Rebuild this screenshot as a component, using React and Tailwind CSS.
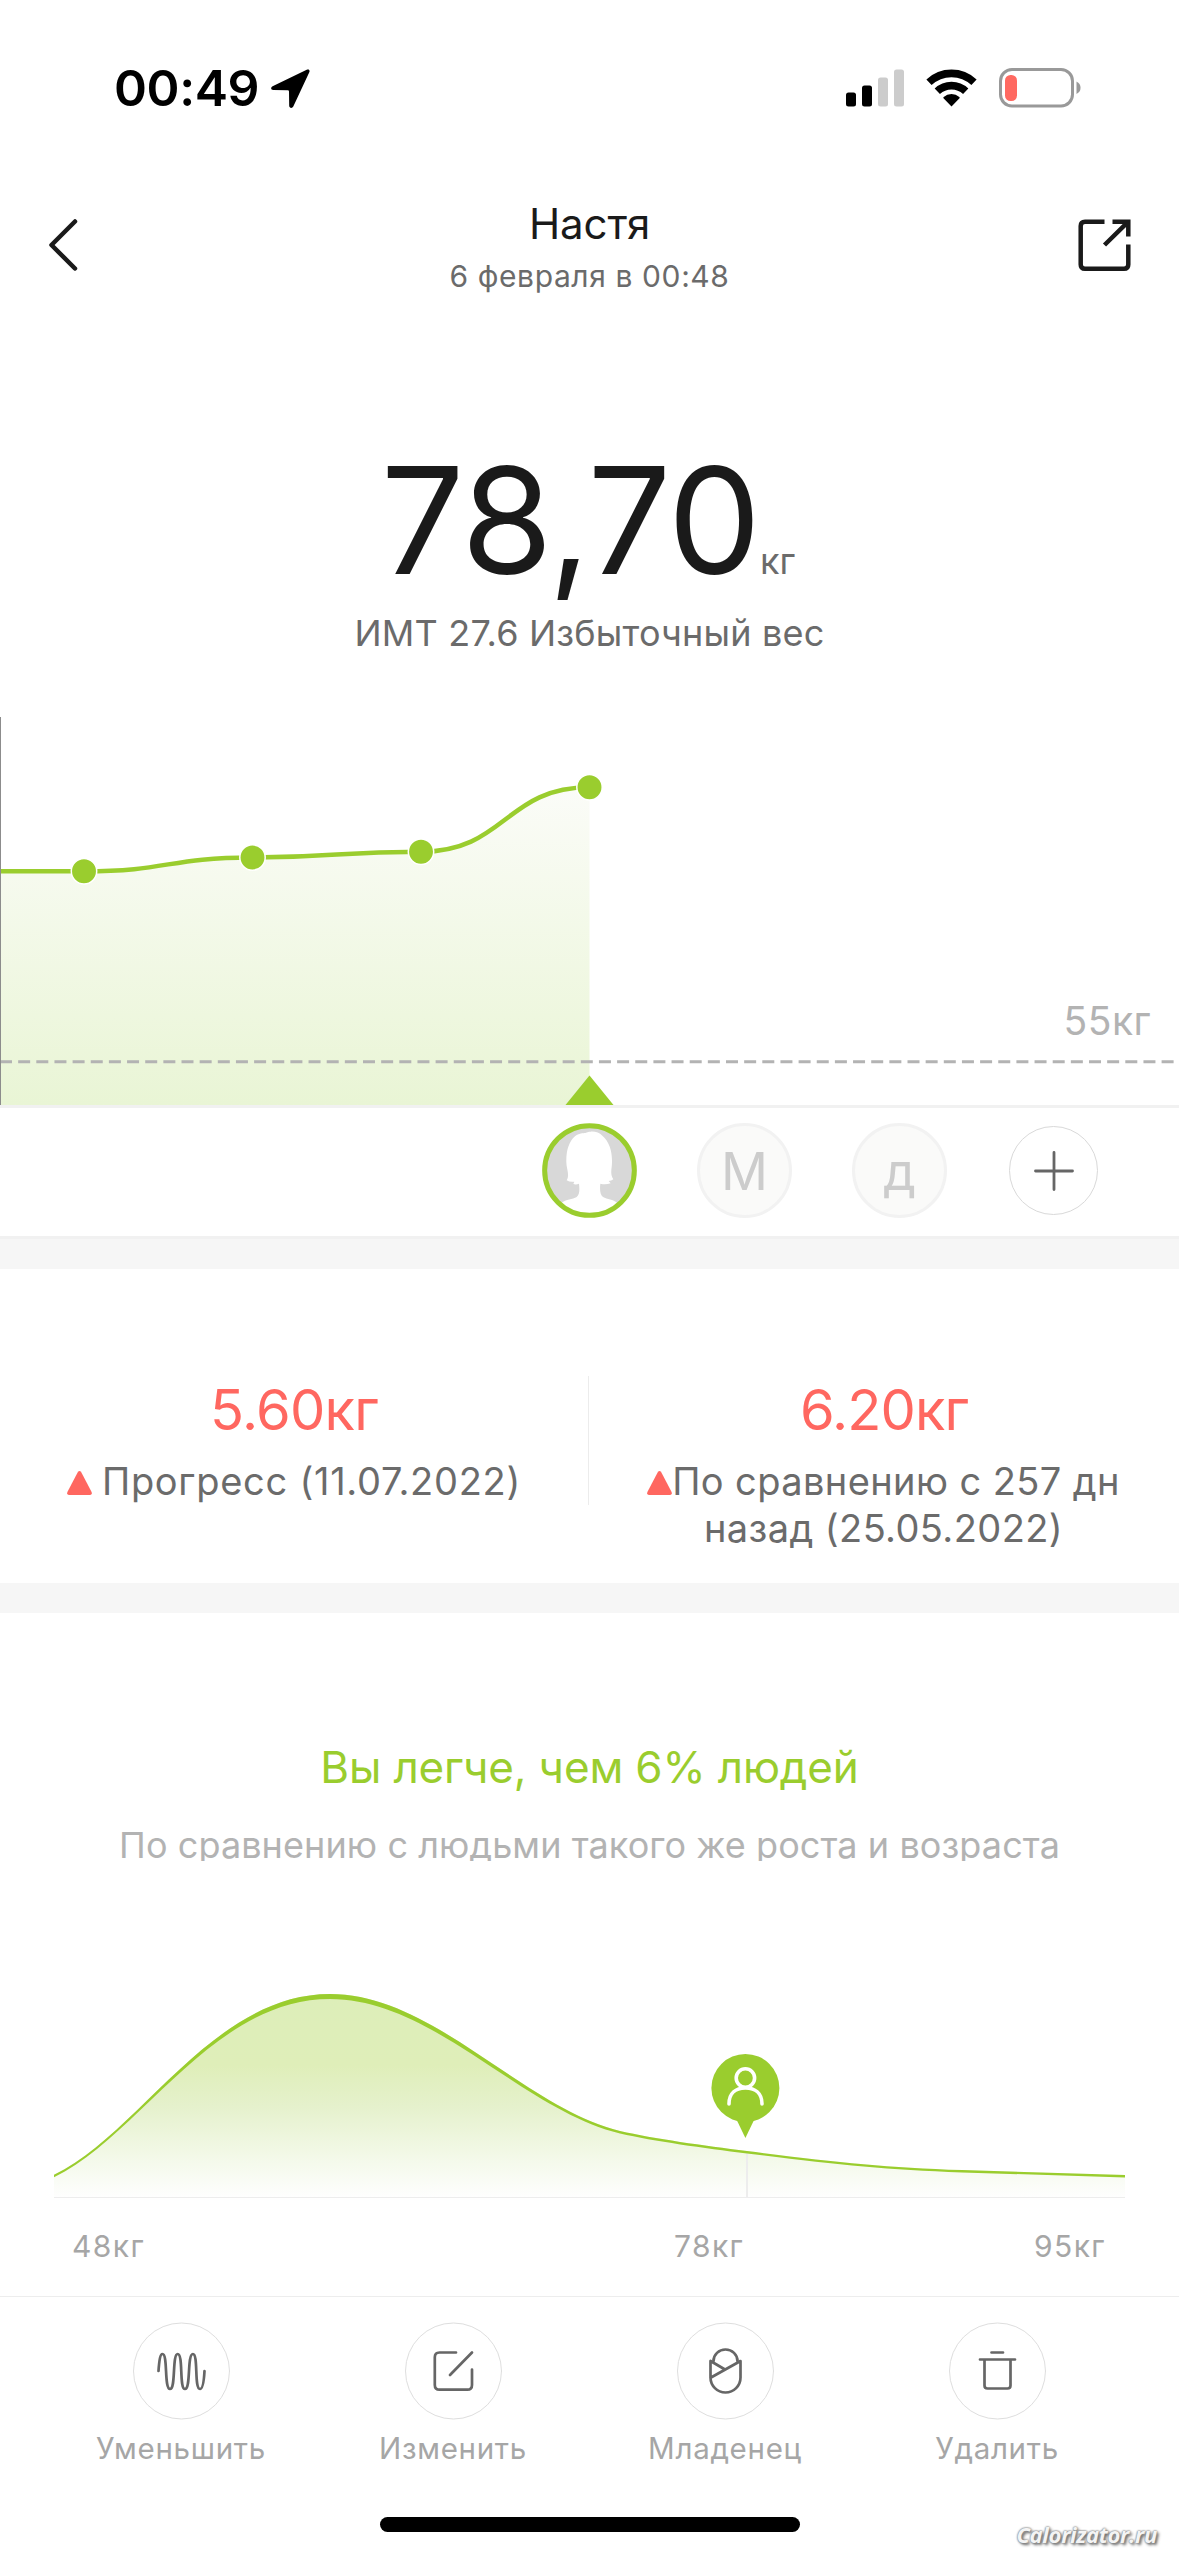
const weights = [
  { x: 84, y: 154.3 },
  { x: 252.5, y: 140.5 },
  { x: 421, y: 134.7 },
  { x: 589.5, y: 70.3 },
];

const actions = [
  { label: "Уменьшить", icon: WaveIcon },
  { label: "Изменить", icon: EditIcon },
  { label: "Младенец", icon: BabyIcon },
  { label: "Удалить", icon: TrashIcon },
];

function stepCurve(points) {
  return points
    .slice(1)
    .map((p, i) => {
      const prev = points[i];
      const mid = (prev.x + p.x) / 2;
      return `C${mid} ${prev.y} ${mid} ${p.y} ${p.x} ${p.y}`;
    })
    .join(" ");
}

// side is -1 for the upper edge of the line and 1 for the lower edge,
// the line is thick at the peak and thin at both ends
function peopleArea(side) {
  const thin = side * 1.2;
  const thick = side * 2.5;
  return (
    `M0 ${186 + thin}` +
    `C85 ${146 + thin} 158 ${6.5 + thick} 276 ${6.5 + thick}` +
    `C380 ${6.5 + thick} 467 ${118 + thin * 1.5} 566 ${142.3 + thin}` +
    `C600 ${150 + thin} 650 ${157 + thin} 693 ${162.3 + thin}` +
    `C780 ${173 + thin} 830 ${179 + thin} 908 ${181.2 + thin}` +
    `L1071 ${186.3 + thin}V207H0Z`
  );
}

function StatusBar() {
  return (
    <div className="flex h-[176px] items-center justify-between pr-[98px] pl-[114px]">
      <div className="flex items-center">
        <span className="w-[157px] text-[50px] leading-[60px] font-semibold tracking-[-0.4px] text-black">
          00:49
        </span>
        <svg width="39" height="39" viewBox="0 0 39 39" fill="#000">
          <path d="M36.2 .6 1.6 17.2C-.6 18.3-.2 21 2.2 21L16.800 21.200Q18 21.200 18 22.400L18.200 36.8C18.300 39.2 21.2 39.7 22.3 37.5L38.4 2.9C39 1.2 37.8-.1 36.2 .6Z" />
        </svg>
      </div>
      <div className="flex items-center">
        <svg width="58" height="38" viewBox="0 0 58 38">
          <rect x="0" y="23.500" width="10" height="14" rx="2.500" fill="#000" />
          <rect x="16" y="16.500" width="10" height="21" rx="2.500" fill="#000" />
          <rect x="32" y="8.500" width="10" height="29" rx="2.500" fill="#cccccc" />
          <rect x="48" y="0.500" width="10" height="37" rx="2.500" fill="#cccccc" />
        </svg>
        <svg className="ml-[22px]" width="51" height="38" viewBox="0 0 51 38">
          <g fill="none" stroke="#000" strokeWidth="7.600">
            <path d="M3 13.300A32.800 32.800 0 0 1 48 13.300" />
            <path d="M11.300 22.300A20.500 20.500 0 0 1 39.700 22.300" />
          </g>
          <path d="M25.500 37.500 17.500 29.300Q17 28.600 17.700 28A11.500 11.500 0 0 1 33.300 28Q34 28.600 33.500 29.300Z" fill="#000" />
        </svg>
        <svg className="ml-[22px]" width="82" height="40" viewBox="0 0 82 40">
          <rect x="1.500" y="1.500" width="72" height="36.500" rx="11.500" fill="none" stroke="#999999" strokeWidth="3" />
          <rect x="6" y="7" width="12" height="26" rx="5.500" fill="#ff6961" />
          <path d="M77.500 13.500Q81.500 15.500 81.500 19.800T77.500 26Z" fill="#999999" />
        </svg>
      </div>
    </div>
  );
}

function Header() {
  return (
    <header className="flex h-[138px] items-center justify-between pr-[48px] pl-[48px]">
      <button aria-label="Назад" className="w-[53px]">
        <svg width="30" height="54" viewBox="0 0 30 54" fill="none" stroke="#1a1a1a" strokeWidth="4.500" strokeLinecap="round" strokeLinejoin="round">
          <path d="M27 3.500 3.500 27 27 50.500" />
        </svg>
      </button>
      <div className="pt-[10px] text-center">
        <h1 className="text-[42px] leading-[52px] tracking-[-0.1px] text-[#1a1a1a]">Настя</h1>
        <p className="text-[30px] leading-[52px] tracking-[0.6px] text-[#6b6b6b]">6 февраля в 00:48</p>
      </div>
      <button aria-label="Поделиться">
        <svg width="53" height="53" viewBox="0 0 53 53" fill="none" stroke="#1a1a1a" strokeWidth="4.500">
          <path d="M26.500 2.700H7Q2.700 2.700 2.700 7V45.500Q2.700 49.800 7 49.800H46Q50.300 49.800 50.300 45.500V25.500" />
          <path d="M34.500 2.700H50.300V17.500M50.300 2.700 26.500 26" />
        </svg>
      </button>
    </header>
  );
}

function Weight() {
  return (
    <section className="pt-[133px] text-center">
      <div className="flex items-baseline justify-center pr-[3px]">
        <span className="text-[148px] leading-[148px] tracking-[-1.2px] text-[#1a1a1a]">78,70</span>
        <span className="text-[36px] text-[#6b6b6b]">кг</span>
      </div>
      <p className="mt-[16px] text-[36px] leading-[44px] tracking-[0.2px] text-[#6b6b6b]">
        ИМТ 27.6 Избыточный вес
      </p>
    </section>
  );
}

function WeightChart() {
  const first = weights[0];
  const line = `M0 ${first.y}H${first.x} ${stepCurve(weights)}`;

  return (
    <section className="relative mt-[62px] h-[391px] border-b-3 border-[#f1f1f1]">
      <svg className="block" width="1179" height="388" viewBox="0 0 1179 388">
        <defs>
          <linearGradient id="weightFill" gradientUnits="userSpaceOnUse" x1="0" y1="70" x2="0" y2="388">
            <stop offset="0" stopColor="#fbfcf8" />
            <stop offset="1" stopColor="#e9f5d5" />
          </linearGradient>
        </defs>
        <path d={`${line} V388H0Z`} fill="url(#weightFill)" />
        <path d="M0 344.700H1179" stroke="#b3b3b3" strokeWidth="3" strokeDasharray="12 6.150" />
        <path d={line} fill="none" stroke="#9acd2e" strokeWidth="4.500" />
        {weights.map((p) => (
          <circle key={p.x} cx={p.x} cy={p.y} r="12.700" fill="#9acd2e" stroke="#fff" strokeWidth="1.500" />
        ))}
        <path d="M589.500 358.500 613.500 388H565.500Z" fill="#9acd2e" />
        <rect width="1" height="388" fill="#8c8c8c" />
      </svg>
      <span className="absolute top-[280px] right-[28px] text-[39px] leading-[48px] tracking-[0.48px] text-[#b3b3b3]">
        55кг
      </span>
    </section>
  );
}

function Letter({ children }) {
  return (
    <div className="flex size-[95px] items-center justify-center rounded-full border-3 border-[#f2f2f2] bg-[#fafaf9] pt-[2px] text-[52px] leading-none text-[#cccccc]">
      {children}
    </div>
  );
}

function Users() {
  return (
    <section className="flex h-[131px] items-start gap-[60px] border-b-3 border-[#f1f1f1] pt-[15px] pl-[542px]">
      <svg width="95" height="95" viewBox="36 40 285 285">
        <defs>
          <clipPath id="avatarClip">
            <circle cx="178.500" cy="182.500" r="132" />
          </clipPath>
        </defs>
        <circle cx="178.500" cy="182.500" r="134.500" fill="#d8d8d8" />
        <path
          clipPath="url(#avatarClip)"
          fill="#fff"
          d="M182 66C196 65 208 69 217 78C238 96 247 125 246 158C246 178 239 192 250 209Q244 214 236 214L242 221Q226 226 211 222C209 240 210 255 219 262C232 270 249 268 262 280V330H94V280C108 268 128 270 140 262C149 255 149 240 147 222Q138 226 130 223L133 216Q120 218 110 212C120 195 109 178 109 158C108 125 116 96 135 80C146 70 160 71 166 70C172 67 178 66 182 66Z"
        />
        <circle cx="178.500" cy="182.500" r="134.500" fill="none" stroke="#9acd2e" strokeWidth="15" />
      </svg>
      <Letter>М</Letter>
      <Letter>д</Letter>
      <button aria-label="Добавить" className="mt-[3px] ml-[2px] flex size-[89px] items-center justify-center rounded-full border border-[#d9d9d9]">
        <svg width="40" height="40" viewBox="0 0 40 40" stroke="#666" strokeWidth="2.800" strokeLinecap="round">
          <path d="M1.500 20H38.500M20 1.500V38.500" />
        </svg>
      </button>
    </section>
  );
}

function UpMark({ className }) {
  return (
    <svg className={className} width="25" height="24" viewBox="0 0 25 24" fill="#ff6760">
      <path d="M11 .8Q12.500-.8 14 .8L24.600 21Q25.400 24 23 24H2Q-.4 24 .4 21Z" />
    </svg>
  );
}

function Progress() {
  return (
    <section className="flex h-[314px] items-start">
      <div className="w-[588px] pt-[113px] text-center">
        <p className="text-[56px] leading-[56px] tracking-[-0.7px] text-[#ff6760]">5.60кг</p>
        <p className="mt-[20px] flex items-center justify-center text-[38px] leading-[47px] tracking-[0.72px] text-[#6b6b6b]">
          <UpMark className="mt-[2px] mr-[10px]" />
          Прогресс (11.07.2022)
        </p>
      </div>
      <div className="mt-[107px] h-[129px] w-px bg-[#ececec]" />
      <div className="flex-1 pt-[113px] text-center">
        <p className="text-[56px] leading-[56px] tracking-[-0.9px] text-[#ff6760]">6.20кг</p>
        <p className="mt-[20px] pr-[1px] text-[38px] leading-[46.500px] tracking-[0.4px] text-[#6b6b6b]">
          <UpMark className="inline align-baseline" />
          По сравнению с 257 дн
          <br />
          назад (25.05.2022)
        </p>
      </div>
    </section>
  );
}

function Comparison() {
  return (
    <section className="h-[683px] pt-[126px]">
      <h2 className="text-center text-[44px] leading-[56px] tracking-[-0.15px] text-[#9acd2e]">
        Вы легче, чем 6% людей
      </h2>
      <p className="mt-[28px] h-[38px] overflow-hidden text-center text-[36px] leading-[44px] tracking-[0.08px] text-[#b3b3b3]">
        По сравнению с людьми такого же роста и возраста
      </p>
      <svg className="mt-[129px] ml-[54px] block" width="1071" height="208" viewBox="0 0 1071 208">
        <defs>
          <linearGradient id="peopleFill" gradientUnits="userSpaceOnUse" x1="0" y1="4" x2="0" y2="207">
            <stop offset="0" stopColor="#ddeeb9" />
            <stop offset="0.350" stopColor="#dfeeb9" />
            <stop offset="0.550" stopColor="#e5f1cc" />
            <stop offset="0.800" stopColor="#f3f9e8" />
            <stop offset="1" stopColor="#fefefe" />
          </linearGradient>
        </defs>
        <path d={peopleArea(-1)} fill="url(#peopleFill)" />
        <path d="M693 163V207" stroke="#ededed" strokeWidth="2" />
        <path d={`${peopleArea(-1)} ${peopleArea(1)}`} fillRule="evenodd" fill="#9acd2e" />
        <path d="M0 207.500H1071" stroke="#ededed" />
        <circle cx="691.400" cy="98" r="34" fill="#9acd2e" />
        <path d="M682.500 129.500 691.400 148 700.300 129.500Z" fill="#9acd2e" />
        <g fill="none" stroke="#fff" strokeWidth="3.600" strokeLinecap="round">
          <circle cx="691.400" cy="88" r="9.200" />
          <path d="M675 114C675 103 682 98 691.400 98S708 103 708 114" />
        </g>
      </svg>
      <div className="mt-[28px] flex pl-[72px] text-[30px] leading-[40px] tracking-[1.4px] text-[#a6a6a6]">
        <span className="w-[602px]">48кг</span>
        <span className="w-[360px]">78кг</span>
        <span>95кг</span>
      </div>
    </section>
  );
}

function WaveIcon() {
  return (
    <path d="M25.500 49C26.300 38 27.300 32 29.500 32C35 32 31 67 37 67C43 67 39 32 44.700 32C50.500 32 46 67 52 67C58 67 54 32 59.900 32C65.500 32 61 67 67 67C70 67 71 58 71.500 49" />
  );
}

function EditIcon() {
  return (
    <>
      <path d="M51 30.500H34.500Q29.800 30.500 29.800 35.200V63Q29.800 67.700 34.500 67.700H62.300Q67 67.700 67 63V47.500" />
      <path d="M45 53 67 30.500" />
    </>
  );
}

function BabyIcon() {
  return (
    <>
      <path d="M36.500 39A12 11.500 0 0 1 60.500 39" />
      <path d="M33.500 39V55.500A15 15 0 0 0 63.500 55.500V39L34 55.500M33.500 39 48 47.500" />
    </>
  );
}

function TrashIcon() {
  return (
    <path d="M42.500 30.500H54M31 37.500H66M35.500 37.500V63.500Q35.500 66.500 38.500 66.500H58.500Q61.500 66.500 61.500 63.500V37.500" />
  );
}

function Actions() {
  return (
    <nav className="flex h-[221px] border-t border-[#ededed] px-[45px] pt-[25px]">
      {actions.map(({ label, icon: Icon }) => (
        <button key={label} className="flex w-[272px] flex-col items-center">
          <svg width="97" height="98" viewBox="0 0 97 98" fill="none" stroke="#666" strokeWidth="2.700" strokeLinecap="round" strokeLinejoin="round">
            <circle cx="48.500" cy="49" r="48" stroke="#dedede" strokeWidth="1" />
            <Icon />
          </svg>
          <span className="mt-[10px] text-[29.500px] leading-[36px] tracking-[0.7px] text-[#a6a6a6]">{label}</span>
        </button>
      ))}
    </nav>
  );
}

export default function App() {
  return (
    <div className="relative h-[2556px] w-[1179px] overflow-hidden bg-white font-['Inter',sans-serif]">
      <StatusBar />
      <Header />
      <Weight />
      <WeightChart />
      <Users />
      <div className="h-[30px] bg-[#f6f6f6]" />
      <Progress />
      <div className="h-[30px] bg-[#f6f6f6]" />
      <Comparison />
      <Actions />
      <div className="mx-auto h-[15px] w-[420px] rounded-full bg-black" />
      <span className="absolute right-[22px] bottom-[6px] font-['Open_Sans',sans-serif] text-[22px] leading-[32px] font-bold tracking-[-0.3px] text-[#f4f4f4] italic [text-shadow:0_0_2px_#777,0_0_2px_#888,2px_2px_3px_#666]">
        Calorizator.ru
      </span>
    </div>
  );
}
